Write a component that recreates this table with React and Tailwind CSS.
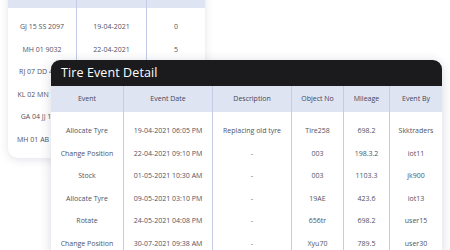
const backCols = [
  { w: "w-[68px]", cells: ["GJ 15 SS 2097", "MH 01 9032", "RJ 07 DD 4521", "KL 02 MN 7788", "GA 04 JJ 1290", "MH 01 AB 6634"] },
  { w: "w-[70px]", cells: ["19-04-2021", "22-04-2021", "", "", "", ""] },
  { w: "w-[59px]", cells: ["0", "5", "", "", "", ""] },
];

const cols = [
  { title: "Event", w: "w-[72px]", cells: ["Allocate Tyre", "Change Position", "Stock", "Allocate Tyre", "Rotate", "Change Position"] },
  { title: "Event Date", w: "w-[89px]", cells: ["19-04-2021 06:05 PM", "22-04-2021 09:10 PM", "01-05-2021 10:30 AM", "09-05-2021 03:10 PM", "24-05-2021 04:08 PM", "30-07-2021 09:38 AM"] },
  { title: "Description", w: "w-[79px]", cells: ["Replacing old tyre", "-", "-", "-", "-", "-"] },
  { title: "Object No", w: "w-[52px]", cells: ["Tire258", "003", "003", "19AE", "656tr", "Xyu70"] },
  { title: "Mileage", w: "w-[46px]", cells: ["698.2", "198.3.2", "1103.3", "423.6", "698.2", "789.5"] },
  { title: "Event By", w: "w-[53px]", cells: ["Skktraders", "iot11", "jk900", "iot13", "user15", "user30"] },
];

export default function App() {
  return (
    <div
      className="relative w-[450px] h-[250px] overflow-hidden bg-white"
      style={{ fontFamily: '"Open Sans", "Noto Sans", sans-serif' }}
    >
      {/* back card */}
      <div className="absolute left-[8px] top-[-19px] flex rounded-b-[10px] bg-white pb-[6px] shadow-[0_2px_10px_rgba(40,50,90,0.13)]">
        {backCols.map((c, i) => (
          <div key={i} className={`${c.w} flex flex-col ${i > 0 ? "border-l border-[#c4cce6]" : ""}`}>
            <div className="h-[27px] bg-[#dfe4f2]" />
            <div className="pt-[8px]">
              {c.cells.map((t, j) => (
                <div key={j} className="h-[22.6px] flex items-center justify-center whitespace-nowrap text-[7px] text-[#4e5366]">
                  {t}
                </div>
              ))}
            </div>
          </div>
        ))}
      </div>

      {/* front card */}
      <div className="absolute left-[51px] top-[60px] w-[391px] rounded-t-[9px] bg-white shadow-[0_2px_12px_rgba(30,40,80,0.18)]">
        <div className="h-[26px] flex items-center pl-[10px] rounded-t-[9px] bg-[#1b1b1d] text-white text-[12.5px] font-medium tracking-[0.1px]">
          Tire Event Detail
        </div>
        <div className="flex">
          {cols.map((c, i) => (
            <div key={i} className={`${c.w} flex flex-col ${i > 0 ? "border-l-[1.5px] border-[#c4cce6]" : ""}`}>
              <div className="h-[26px] flex items-center justify-center bg-[#dfe4f2] text-[7px] font-medium text-[#3f465c] whitespace-nowrap">
                {c.title}
              </div>
              <div className="pt-[8px]">
                {c.cells.map((t, j) => (
                  <div key={j} className="h-[22.6px] flex items-center justify-center whitespace-nowrap text-[7px] text-[#4e5366]">
                    {t}
                  </div>
                ))}
              </div>
            </div>
          ))}
        </div>
      </div>
    </div>
  );
}
